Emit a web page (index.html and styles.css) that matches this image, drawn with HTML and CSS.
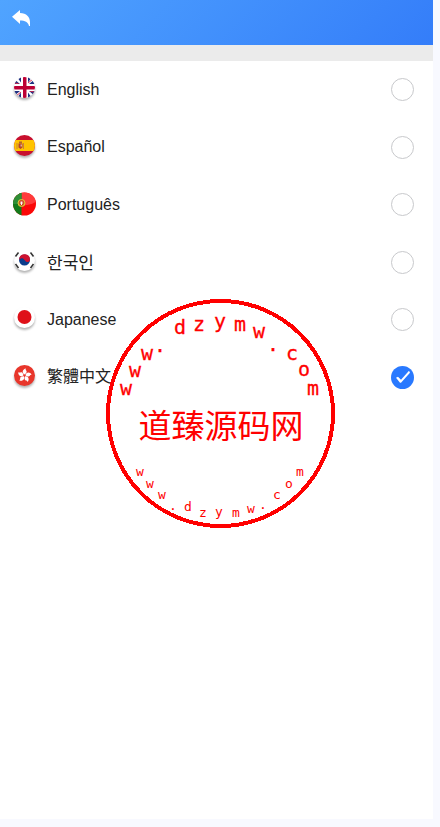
FILE: index.html
```html
<!DOCTYPE html>
<html lang="en">
<head>
<meta charset="utf-8">
<meta name="viewport" content="width=device-width, initial-scale=1">
<title>Language</title>
<link rel="stylesheet" href="styles.css">
</head>
<body>
<div class="page">
  <header class="topbar">
    <button class="back" type="button" aria-label="Back">
      <svg width="18" height="17" viewBox="0 0 18 17"><path d="M0 6.800 8 0v3c6.500 0 10 4 10 9v4h-1c-1-4-4-5.500-9-5.500V14Z" fill="#fff"/></svg>
    </button>
  </header>
  <main class="languages">
    <label class="row">
      <svg class="flag" viewBox="0 0 25 25">
        <clipPath id="disc"><circle cx="12.500" cy="10.500" r="10.500"/></clipPath>
        <g clip-path="url(#disc)">
          <path fill="#fff" d="M0 0h25v22H0z"/>
          <path fill="#1f2f80" d="M5 0h4v5.500zM2 2l6 5H0zM16 0h4l-4 5.500zM23 2l-6 5h8zM5 21h4v-5.500zM2 19l6-5H0zM16 21h4l-4-5.500zM23 19l-6-5h8z"/>
          <path stroke="#d5294d" stroke-width="1" d="m16 6 5-4M9 15l-5 4M3 6l4 1M22 15l-4-1"/>
          <path fill="#fff" d="M9 0h7v22H9zM0 7h25v7H0z"/>
          <path fill="#bd0034" d="M11 0h3.500v22H11zM0 9h25v3.500H0z"/>
        </g>
      </svg>
      <span class="name">English</span>
      <input class="radio" type="radio" name="language">
    </label>
    <label class="row">
      <svg class="flag" viewBox="0 0 25 25">
        <g clip-path="url(#disc)">
          <path fill="#c8102e" d="M0 0h25v22H0z"/>
          <path fill="#ffc400" d="M0 5h25v11H0z"/>
          <path fill="#c9823a" d="M4.500 8h1v6h-1zM11 8h1v6h-1z"/>
          <path fill="#b5442c" d="M6.500 8.500h4v4l-2 1.500-2-1.500z"/>
          <path fill="#b5652b" d="M7 6.500h3v2H7z"/>
          <path fill="#d9b09a" d="M8.500 9.500h1.500v2H8.500z"/>
        </g>
      </svg>
      <span class="name">Español</span>
      <input class="radio" type="radio" name="language">
    </label>
    <label class="row">
      <svg class="flag flat" viewBox="0 0 25 25">
        <clipPath id="wide"><circle cx="12.500" cy="12" r="11.500"/></clipPath>
        <g clip-path="url(#wide)">
          <path fill="#fb0808" d="M0 0h25v25H0z"/>
          <path fill="#ff3b3b" d="M0 0h25v9Q18 14 9 13z"/>
          <path fill="#137a1b" d="M0 0h9.500v25H0z"/>
          <path fill="#2f8e35" d="M0 0h9.500v12H0z"/>
          <circle cx="9.500" cy="11" r="3.500" fill="#b58a20" stroke="#e5c23b"/>
          <path fill="#fff" stroke="#d52b1e" d="M8 9h3v3l-1.500 1.500L8 12z"/>
        </g>
      </svg>
      <span class="name">Português</span>
      <input class="radio" type="radio" name="language">
    </label>
    <label class="row">
      <svg class="flag" viewBox="0 0 25 25">
        <circle cx="12.500" cy="10.500" r="10.500" fill="#fff"/>
        <circle cx="12.500" cy="10" r="5.500" fill="#0b3c8c"/>
        <path fill="#cd1230" d="M7.300 8A5.500 5.500 0 0 1 18 10c-1 3-4 2.500-5.500 0S8.500 8 7.300 10Z"/>
        <path stroke="#333" stroke-width="1.500" d="m3.500 6.500 3-4M21.500 6.500l-3-4M3.500 14l3 4M21.500 14l-3 4"/>
      </svg>
      <span class="name korean" lang="ko">한국인</span>
      <input class="radio" type="radio" name="language">
    </label>
    <label class="row">
      <svg class="flag" viewBox="0 0 25 25">
        <circle cx="12.500" cy="10.500" r="10.500" fill="#fff"/>
        <circle cx="12.500" cy="10" r="7" fill="#df1119"/>
      </svg>
      <span class="name">Japanese</span>
      <input class="radio" type="radio" name="language">
    </label>
    <label class="row">
      <svg class="flag" viewBox="0 0 25 25">
        <circle cx="12.500" cy="10.500" r="10.500" fill="#e8362b"/>
        <g fill="#fff">
          <path id="petal" d="M12.500 9.500C9.500 8 10.500 4 14 3.500c-1.200 1.500 1.200 2 .6 3.800q-.6 1.500-2.100 2.200Z"/>
          <use href="#petal" transform="rotate(72 12.500 10.500)"/>
          <use href="#petal" transform="rotate(144 12.500 10.500)"/>
          <use href="#petal" transform="rotate(216 12.500 10.500)"/>
          <use href="#petal" transform="rotate(288 12.500 10.500)"/>
        </g>
      </svg>
      <span class="name" lang="zh-Hant">繁體中文</span>
      <input class="radio" type="radio" name="language" checked>
    </label>
  </main>
</div>
<svg class="stamp" viewBox="0 0 230 230">
  <circle cx="115.500" cy="115.500" r="112.500" fill="none" stroke="#f00" stroke-width="4" shape-rendering="crispEdges"/>
  <text class="arc-large" x="21 30 42 55 75 94 115 135 154 168 187 199 208" y="97 79 62 54 36 33 30 33 40 53 62 78 97">www.dzymw.com</text>
  <text class="center" x="116" y="140">道臻源码网</text>
  <text class="arc-small" x="35 45 57 68 83 98 114 131 146 158 172 184 195" y="178 190 201 212 213 219 218 219 215 211 201 190 178">www.dzymw.com</text>
</svg>
</body>
</html>
```
FILE: styles.css
```css
* {
  box-sizing: border-box;
}

body {
  position: relative;
  display: flex;
  min-height: 100vh;
  margin: 0;
  padding: 0 7px 8px 0;
  background: #f8f9ff;
  color: #222;
  font: 16px/24px "Liberation Sans", "Noto Sans CJK TC", sans-serif;
}

.page {
  flex: 1;
  background: #fff;
}

.topbar {
  display: flex;
  align-items: flex-start;
  height: 45px;
  padding: 10px 12px;
  background: linear-gradient(135deg, #50a4ff, #347df9);
}

.back {
  display: flex;
  padding: 0;
  border: 0;
  background: none;
}

.languages {
  display: grid;
  grid-auto-rows: 1fr;
  height: 361px;
  border-top: 16px solid #ebebeb;
}

.row {
  display: flex;
  align-items: center;
  gap: 10px;
  padding: 0 19px 0 12px;
}

.flag {
  width: 25px;
  height: 25px;
  filter: drop-shadow(0 2px 1px rgba(0, 0, 0, 0.3));
}

.flat {
  filter: none;
}

.name {
  flex: 1;
}

.korean {
  font-family: "Noto Sans CJK KR", sans-serif;
  font-size: 17px;
}

.radio {
  appearance: none;
  width: 23px;
  height: 23px;
  margin: 0;
  border: 1px solid #c8c9cc;
  border-radius: 50%;
}

.radio:checked {
  border: 0;
  background: #2979ff;
}

.radio:checked::after {
  content: "";
  display: block;
  height: 23px;
  background: #fff;
  clip-path: polygon(5px 12px, 7px 11px, 10px 14px, 18px 5px, 19px 7px, 10px 17px, 9px 17px);
}

.stamp {
  position: absolute;
  top: 298px;
  left: calc(50% - 115px);
  width: 230px;
  height: 230px;
  fill: #f00;
  text-anchor: middle;
  pointer-events: none;
}

.arc-large {
  font: 20px "DejaVu Sans Mono", monospace;
  stroke: #f00;
  stroke-width: 0.3;
}

.arc-small {
  font: 13px "DejaVu Sans Mono", monospace;
}

.center {
  font: 33px "Noto Sans CJK SC", sans-serif;
}
```
